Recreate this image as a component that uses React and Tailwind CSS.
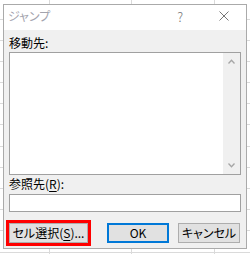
export default function App() {
  const hLines = [19, 40, 61, 82, 103, 124, 146, 167, 188, 209, 230, 252];
  const vLines = [49, 131, 214];
  return (
    <div className="relative w-[250px] h-[254px] bg-white overflow-hidden font-['Noto_Sans_CJK_JP','Noto_Sans',sans-serif] [font-feature-settings:'palt'] text-[12px] text-black">
      <svg className="absolute inset-0" width="250" height="254" shapeRendering="crispEdges">
        {hLines.map((y) => (
          <line key={'h' + y} x1="0" x2="250" y1={y + 0.5} y2={y + 0.5} stroke="#dadada" strokeWidth="1" />
        ))}
        {vLines.map((x) => (
          <line key={'v' + x} x1={x + 0.5} x2={x + 0.5} y1="0" y2="254" stroke="#dadada" strokeWidth="1" />
        ))}
      </svg>

      <div className="absolute left-[3px] top-[4px] w-[244px] h-[245px] border border-[#aaaaaa] bg-[#f0f0f0] flex flex-col">
        {/* title bar */}
        <div className="h-[25px] bg-white flex items-center pl-[4px] pr-[17px] pb-[3px]">
          <span className="text-[#a3a3ad] leading-none">ジャンプ</span>
          <span className="ml-auto text-[13px] leading-none text-[#7a7a7a] font-light">?</span>
          <svg className="ml-[36px]" width="10" height="10" viewBox="0 0 10 10">
            <path d="M0.5 0.5 L9.5 9.5 M9.5 0.5 L0.5 9.5" stroke="#777" strokeWidth="1" fill="none" />
          </svg>
        </div>

        {/* body */}
        <div className="flex-1 flex flex-col px-[5px]">
          <div className="h-[18px] mt-[4px] leading-[18px]">移動先:</div>
          <div className="h-[123px] border border-[#a0a0a0] bg-white flex justify-end">
            <div className="w-[17px] bg-[#f0f0f0] flex flex-col justify-between">
              <div className="h-[17px] flex items-center justify-center">
                <svg width="7" height="5" viewBox="0 0 7 5">
                  <path d="M0.5 4.5 L3.5 1.2 L6.5 4.5" stroke="#a6a6a6" strokeWidth="1.3" fill="none" />
                </svg>
              </div>
              <div className="h-[17px] flex items-center justify-center">
                <svg width="7" height="5" viewBox="0 0 7 5">
                  <path d="M0.5 0.5 L3.5 3.8 L6.5 0.5" stroke="#a6a6a6" strokeWidth="1.3" fill="none" />
                </svg>
              </div>
            </div>
          </div>
          <div className="h-[19px] leading-[18px]">
            参照先(<span className="underline underline-offset-2">R</span>):
          </div>
          <div className="h-[18px] border border-[#a0a0a0] bg-white"></div>

          <div className="mt-[8px] ml-[-3px] flex items-center">
            <div className="border-[3px] border-[#ff0000]">
              <div className="w-[79px] h-[20px] border border-[#adadad] bg-[#e1e1e1] flex items-center justify-center leading-none">
                セル選択(<span className="underline underline-offset-2">S</span>)...
              </div>
            </div>
            <div className="ml-[16px] w-[62px] h-[20px] border-2 border-[#0078d7] bg-[#e1e1e1] flex items-center justify-center leading-none">
              OK
            </div>
            <div className="ml-[9px] w-[62px] h-[20px] border border-[#adadad] bg-[#e1e1e1] flex items-center justify-center leading-none">
              キャンセル
            </div>
          </div>
        </div>
      </div>
    </div>
  );
}
